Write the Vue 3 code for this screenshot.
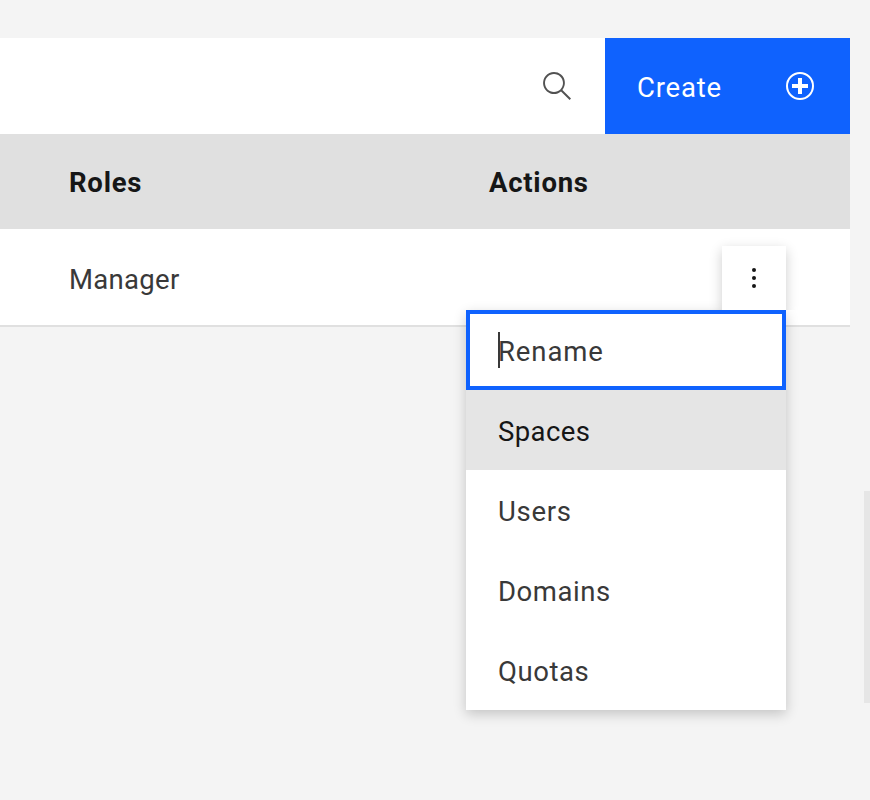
<script setup>
const items = [
  { label: 'Rename', cls: 'rename' },
  { label: 'Spaces', cls: 'spaces' },
  { label: 'Users', cls: 'users' },
  { label: 'Domains', cls: 'domains' },
  { label: 'Quotas', cls: 'quotas' }
]
</script>

<template>
  <main class="page">
    <section class="table">
      <div class="toolbar">
        <div class="search">
          <svg width="32" height="32" viewBox="0 0 16 16">
            <path d="M15,14.3L10.7,10c1.9-2.3,1.6-5.8-0.7-7.7S4.2,0.7,2.3,3S0.7,8.8,3,10.7c2,1.7,5,1.7,7,0l4.3,4.3L15,14.3z M2,6.5C2,4,4,2,6.5,2S11,4,11,6.5S9,11,6.5,11S2,9,2,6.5z" fill="#525252" />
          </svg>
        </div>
        <button class="create">
          <span class="create-label">Create</span>
          <svg width="32" height="32" viewBox="0 0 32 32">
            <circle cx="16" cy="16" r="13" fill="none" stroke="#fff" stroke-width="2" />
            <path d="M14 8h4v6h6v4h-6v6h-4v-6H8v-4h6z" fill="#fff" />
          </svg>
        </button>
      </div>
      <div class="row head">
        <span class="roles">Roles</span>
        <span class="actions">Actions</span>
      </div>
      <div class="row body">
        <span class="manager">Manager</span>
        <div class="overflow">
          <button class="trigger">
            <svg width="32" height="32" viewBox="0 0 32 32" fill="#161616">
              <circle cx="16" cy="8" r="2" />
              <circle cx="16" cy="16" r="2" />
              <circle cx="16" cy="24" r="2" />
            </svg>
          </button>
          <ul class="menu">
            <li v-for="(item, i) in items" :key="item.label" :class="{ focused: i === 0, hovered: i === 1 }">
              <span :class="item.cls">{{ item.label }}</span>
            </li>
          </ul>
        </div>
      </div>
    </section>
    <div class="scrollbar"></div>
  </main>
</template>

<style>
body {
  margin: 0;
  background: #f4f4f4;
}
</style>

<style scoped>
.page {
  position: relative;
  box-sizing: border-box;
  width: 870px;
  height: 800px;
  padding: 38px 20px 0 0;
  overflow: hidden;
  background: #f4f4f4;
  color: #393939;
  font: 400 27.5px/36px Roboto, "Liberation Sans", sans-serif;
  letter-spacing: 0.55px;
}
svg {
  display: block;
}
button {
  border: 0;
  font: inherit;
  letter-spacing: inherit;
}
.toolbar {
  display: flex;
  height: 96px;
  background: #fff;
}
.search {
  flex: 1;
  display: flex;
  justify-content: flex-end;
  align-items: center;
  padding-right: 32px;
}
.create {
  box-sizing: border-box;
  width: 245px;
  padding: 0 34px 0 32px;
  display: flex;
  align-items: center;
  justify-content: space-between;
  background: #0f62fe;
  color: #fff;
  text-align: left;
}
.create-label {
  padding-top: 3px;
  letter-spacing: 0.8px;
}
.row {
  display: grid;
  grid-template-columns: 420px 1fr;
  align-items: center;
  padding-left: 69px;
}
.head {
  height: 95px;
  background: #e0e0e0;
  color: #161616;
  font-weight: 700;
}
.head span {
  padding-top: 2px;
  letter-spacing: 0.75px;
}
.body {
  height: 96px;
  background: #fff;
  border-bottom: 2px solid #e0e0e0;
}
.manager {
  padding-top: 6px;
  letter-spacing: 0.3px;
}
.overflow {
  position: relative;
  justify-self: end;
  width: 64px;
  height: 64px;
  margin: 2px 64px 0 0;
}
.trigger {
  position: relative;
  z-index: 2;
  width: 64px;
  height: 64px;
  padding: 0 16px;
  background: #fff;
  box-shadow: 0 4px 12px rgba(0, 0, 0, 0.2);
  clip-path: inset(-16px -16px 0 -16px);
}
.menu {
  position: absolute;
  top: 64px;
  right: 0;
  z-index: 1;
  width: 320px;
  margin: 0;
  padding: 0;
  list-style: none;
  background: #fff;
  box-shadow: 0 4px 12px rgba(0, 0, 0, 0.2);
}
.menu li {
  box-sizing: border-box;
  height: 80px;
  padding: 24px 32px 20px;
}
.menu li.focused {
  padding: 18px 28px;
  border: 4px solid #0f62fe;
}
.focused span {
  display: block;
  box-sizing: border-box;
  height: 36px;
  line-height: 40px;
  border-left: 2px solid #393939;
  text-indent: -2px;
}
.rename {
  letter-spacing: 0.9px;
}
.spaces {
  letter-spacing: 0.4px;
}
.users {
  letter-spacing: 0.7px;
}
.menu li.hovered {
  background: #e5e5e5;
  color: #161616;
}
.scrollbar {
  position: absolute;
  top: 491px;
  right: 0;
  width: 6px;
  height: 212px;
  background: #e6e6e6;
}
</style>
